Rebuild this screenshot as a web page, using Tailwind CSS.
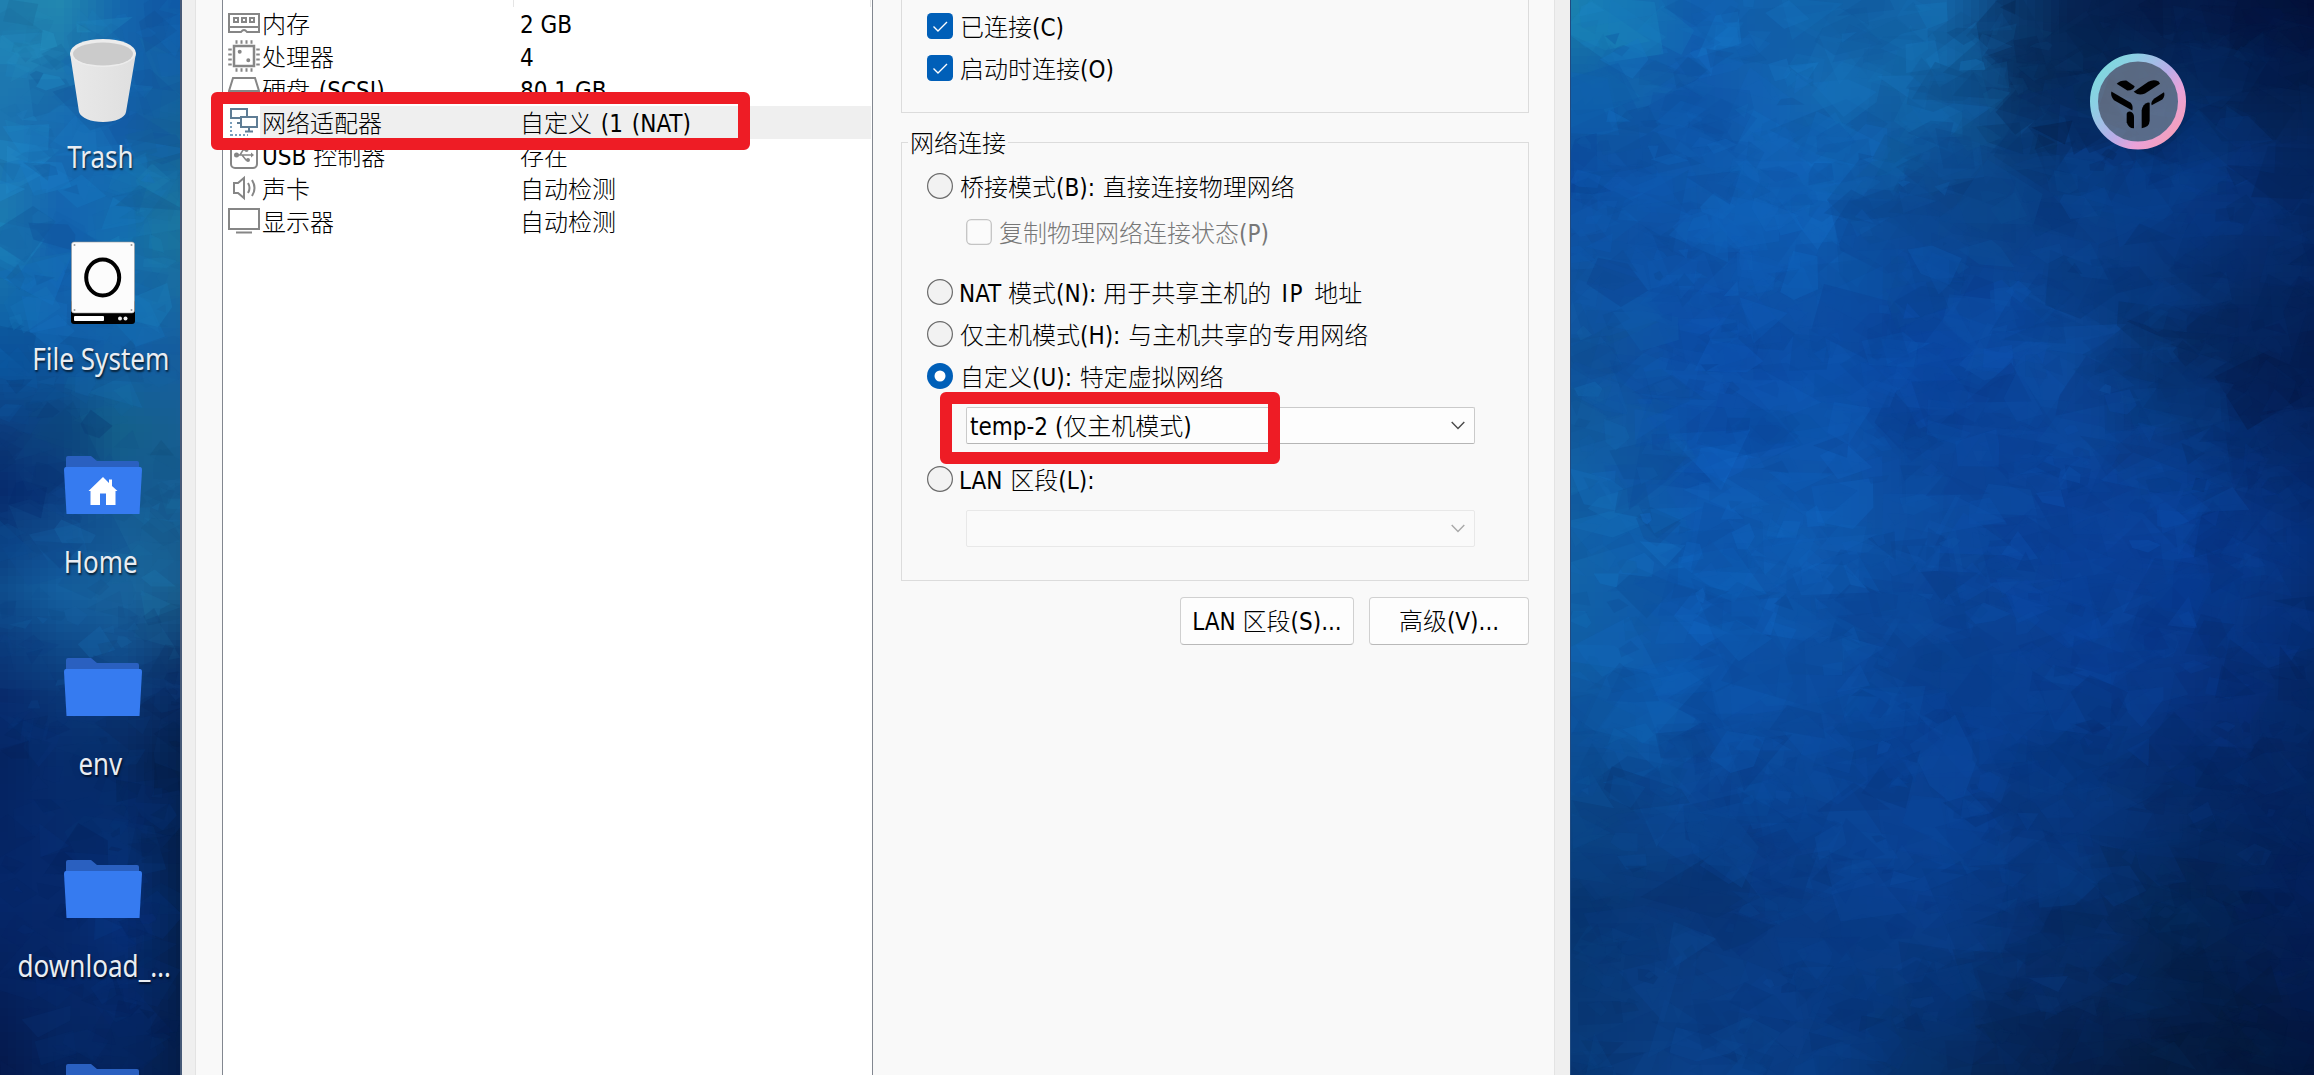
<!DOCTYPE html>
<html lang="zh-CN">
<head>
<meta charset="utf-8">
<title>虚拟机设置</title>
<script src="https://cdn.jsdelivr.net/npm/@tailwindcss/browser@4"></script>
</head>
<body class="h-[1075px] w-[2314px] overflow-hidden bg-[#062a66]">
<main class="relative flex h-[1075px] w-[2314px] overflow-hidden font-light text-[24px] text-black font-['DejaVu_Sans_Condensed','Noto_Sans_CJK_SC',sans-serif]">

  <!-- desktop, left strip -->
  <section class="relative h-full w-[182px] shrink-0 overflow-hidden border-r-2 border-[#465a78]">
    <svg id="wall-left" class="absolute inset-0" width="182" height="1075" viewBox="0 0 182 1075"></svg>
    <div class="relative flex flex-col font-normal text-[30px] leading-[36px] text-[#e9edf2] font-['Noto_Sans',sans-serif]">
      <div class="flex h-[202px] w-[201px] shrink-0 flex-col items-center pt-[38px]">
        <svg class="ml-[5px] shrink-0" width="68" height="86" viewBox="0 0 68 86"><defs><linearGradient id="bin"><stop offset="0" stop-color="#e9e9e9"/><stop offset="1" stop-color="#dfdfdf"/></linearGradient></defs><path d="M1 15L10 74C12 80 22 84 34 84S56 80 57 74L67 15Z" fill="url(#bin)"/><ellipse cx="34" cy="15" rx="33" ry="14" fill="#ececec"/><ellipse cx="34" cy="16" rx="30" ry="11.500" fill="#cbcbcb"/></svg>
        <span class="mt-[15px] scale-x-[0.865] whitespace-nowrap [text-shadow:1px_2px_2px_rgba(0,0,0,0.65)]">Trash</span>
      </div>
      <div class="flex h-[202px] w-[201px] shrink-0 flex-col items-center pt-[38px]">
        <svg class="ml-[5px] shrink-0" width="68" height="86" viewBox="0 0 68 86"><rect x="2" y="60" width="64" height="24" rx="3" fill="#000"/><rect x="2.500" y="2" width="63" height="71" rx="2.500" fill="#fcfcfc" stroke="#999" stroke-width=".6"/><ellipse cx="33.700" cy="37.500" rx="16.500" ry="18" fill="none" stroke="#000" stroke-width="4"/><rect x="5" y="76" width="30" height="5" rx="1" fill="#fff"/><circle cx="51" cy="78.500" r="2" fill="#eee"/><circle cx="56.500" cy="78.500" r="2" fill="#eee"/><g fill="#999"><circle cx="5.500" cy="5" r="1"/><circle cx="62.500" cy="5" r="1"/><circle cx="5.500" cy="70" r="1"/><circle cx="62.500" cy="70" r="1"/></g></svg>
        <span class="mt-[15px] scale-x-[0.87] whitespace-nowrap [text-shadow:1px_2px_2px_rgba(0,0,0,0.65)]">File System</span>
      </div>
      <div class="flex h-[202px] w-[201px] shrink-0 flex-col items-center pt-[50px]">
        <svg class="ml-[5px] shrink-0" width="80" height="62" viewBox="0 0 80 62"><path d="M3 16V4Q3 2 5 2H28L34 7H74Q76 7 76 9V16Z" fill="#2a60c0"/><path d="M1 16Q1 13 3 13H77Q79 13 79 16L76.500 60H3.500Z" fill="#367bf0"/><path d="M25.500 37L40 23L46 29V25.500H49V32L54.500 37H52.500V51H43V39.500H37V51H27.500V37Z" fill="#fff"/></svg>
        <span class="mt-[28px] ml-px scale-x-[0.865] whitespace-nowrap [text-shadow:1px_2px_2px_rgba(0,0,0,0.65)]">Home</span>
      </div>
      <div class="flex h-[202px] w-[201px] shrink-0 flex-col items-center pt-[50px]">
        <svg class="ml-[5px] shrink-0" width="80" height="62" viewBox="0 0 80 62"><path d="M3 16V4Q3 2 5 2H28L34 7H74Q76 7 76 9V16Z" fill="#2a60c0"/><path d="M1 16Q1 13 3 13H77Q79 13 79 16L76.500 60H3.500Z" fill="#367bf0"/></svg>
        <span class="mt-[28px] scale-x-[0.86] whitespace-nowrap [text-shadow:1px_2px_2px_rgba(0,0,0,0.65)]">env</span>
      </div>
      <div class="flex h-[204px] w-[201px] shrink-0 flex-col items-center pt-[50px]">
        <svg class="ml-[5px] shrink-0" width="80" height="62" viewBox="0 0 80 62"><path d="M3 16V4Q3 2 5 2H28L34 7H74Q76 7 76 9V16Z" fill="#2a60c0"/><path d="M1 16Q1 13 3 13H77Q79 13 79 16L76.500 60H3.500Z" fill="#367bf0"/></svg>
        <span class="mt-[28px] -ml-[12px] scale-x-[0.87] whitespace-nowrap [text-shadow:1px_2px_2px_rgba(0,0,0,0.65)]">download_…</span>
      </div>
      <div class="flex h-[202px] w-[201px] shrink-0 flex-col items-center pt-[50px]">
        <svg class="ml-[5px] shrink-0" width="80" height="62" viewBox="0 0 80 62"><path d="M3 16V4Q3 2 5 2H28L34 7H74Q76 7 76 9V16Z" fill="#2a60c0"/><path d="M1 16Q1 13 3 13H77Q79 13 79 16L76.500 60H3.500Z" fill="#367bf0"/></svg>
      </div>
    </div>
  </section>

  <!-- settings dialog -->
  <section class="flex h-full w-[1388px] shrink-0 bg-[#efefef] pl-[13px] pr-[15px]">
    <div class="flex h-full w-[1360px] border-x border-[#e3e3e3] bg-[#f9f9f9] pl-[26px]">

      <!-- device list -->
      <div class="flex h-full w-[651px] shrink-0 flex-col border-x border-[#828790] bg-white leading-[33px]">
        <div class="flex h-[7px] shrink-0 justify-between pl-[290px] pr-px"><i class="w-px bg-[#e5e5e5]"></i><i class="w-px bg-[#e5e5e5]"></i></div>
        <div class="flex h-[33px] pl-[5px]">
          <svg class="shrink-0" width="34" height="33" fill="none" stroke="#868686" stroke-width="2"><path d="M1 7H31V25H19Q16 21 13 25H1ZM1 20H31"/><path d="M6 11H10V15H6ZM14 11H18V15H14ZM22 11H26V15H22Z"/></svg>
          <span class="w-[258px] pt-[2px]">内存</span><span class="pt-[2px]">2 GB</span>
        </div>
        <div class="flex h-[33px] pl-[5px]">
          <svg class="shrink-0" width="34" height="33" fill="none" stroke="#868686" stroke-width="2"><path d="M6 6H26V26H6Z" stroke-width="2.500"/><path stroke-width="3.500" stroke-dasharray="2 3" d="M7.500 2H25M7.500 30H25M2 8.500V26M30 8.500V26"/><circle cx="11.700" cy="11.700" r="1" /><circle cx="20.300" cy="20.300" r="1"/></svg>
          <span class="w-[258px] pt-[2px]">处理器</span><span class="pt-[2px]">4</span>
        </div>
        <div class="flex h-[33px] pl-[5px]">
          <svg class="shrink-0" width="34" height="33" fill="none" stroke="#868686" stroke-width="2"><path d="M1 18L5 5H27L31 18V28H1ZM1 18H31"/></svg>
          <span class="w-[258px] pt-[2px] [word-spacing:2px]">硬盘 (SCSI)</span><span class="pt-[2px]">80.1 GB</span>
        </div>
        <div class="mr-px flex h-[33px] pl-[5px] bg-[linear-gradient(90deg,#fff_37px,#efefef_37px)]">
          <svg class="shrink-0" width="34" height="33" fill="none" stroke="#5f7d95" stroke-width="2"><path d="M13 12H3V3H19V10M9 17H13"/><path d="M13 11H29V21H13ZM21 21V25M17 25.500H25"/><path stroke="#7ba0bd" stroke-dasharray="2 2" d="M3 16V30M3 29H20"/></svg>
          <span class="w-[258px] pt-[2px]">网络适配器</span><span class="pt-[2px] [word-spacing:2px]">自定义 (1 (NAT)</span>
        </div>
        <div class="flex h-[33px] pl-[5px]">
          <svg class="shrink-0" width="34" height="33" fill="none" stroke="#868686" stroke-width="2"><rect x="3" y="3" width="26" height="26" rx="4"/><path stroke-width="1.500" d="M9 16H24M12 16L15 11H18M14 16L18 21H20"/><circle cx="8.500" cy="16" r="1.500" fill="#868686"/><path d="M23 13.500L26 16L23 18.500Z" fill="#868686" stroke="none"/><circle cx="18.500" cy="11" r="1"/><circle cx="20" cy="21" r="1"/></svg>
          <span class="w-[258px] pt-[2px]">USB 控制器</span><span class="pt-[2px]">存在</span>
        </div>
        <div class="flex h-[33px] pl-[5px]">
          <svg class="shrink-0" width="34" height="33" fill="none" stroke="#868686" stroke-width="2"><path d="M6 11H10L16 6V26L10 21H6ZM20 11Q23 16 20 21M24 8Q29 16 24 24"/></svg>
          <span class="w-[258px] pt-[2px]">声卡</span><span class="pt-[2px]">自动检测</span>
        </div>
        <div class="flex h-[33px] pl-[5px]">
          <svg class="shrink-0" width="34" height="33" fill="none" stroke="#868686" stroke-width="2"><path d="M1 4H31V24H1ZM8 27.500H24"/></svg>
          <span class="w-[258px] pt-[2px]">显示器</span><span class="pt-[2px]">自动检测</span>
        </div>
      </div>

      <!-- adapter settings -->
      <div class="flex h-full w-[656px] shrink-0 flex-col pl-[28px] leading-[30px]">
        <div class="flex h-[113px] shrink-0 flex-col gap-[16px] border border-t-0 border-[#dcdcdc] pl-[25px] pt-[13px]">
          <label class="flex h-[26px] gap-[7px]"><svg width="26" height="26"><rect width="26" height="26" rx="4.500" fill="#005fb8"/><path d="M6.500 13.500L11 18L20 9" fill="none" stroke="#fff" stroke-width="1.400"/></svg><span>已连接(C)</span></label>
          <label class="flex h-[26px] gap-[7px]"><svg width="26" height="26"><rect width="26" height="26" rx="4.500" fill="#005fb8"/><path d="M6.500 13.500L11 18L20 9" fill="none" stroke="#fff" stroke-width="1.400"/></svg><span>启动时连接(O)</span></label>
        </div>
        <div class="relative mt-[29px] flex h-[439px] shrink-0 flex-col border border-[#dcdcdc] pl-[25px] pt-[30px]">
          <span class="absolute -top-[14px] left-[6px] bg-[#f9f9f9] px-[2px]">网络连接</span>
          <label class="flex h-[26px] gap-[7px]"><svg width="26" height="26"><circle cx="13" cy="13" r="12.400" fill="#f2f2f2" stroke="#6b6b6b" stroke-width="1.200"/></svg><span class="[word-spacing:1px]">桥接模式(B): 直接连接物理网络</span></label>
          <label class="ml-[39px] mt-[20px] flex h-[26px] gap-[7px] text-[#777]"><svg width="26" height="26"><rect x=".7" y=".7" width="24.600" height="24.600" rx="4.500" fill="#fbfbfb" stroke="#c4c4c4" stroke-width="1.300"/></svg><span>复制物理网络连接状态(P)</span></label>
          <label class="mt-[34px] flex h-[26px] gap-[6px]"><svg width="26" height="26"><circle cx="13" cy="13" r="12.400" fill="#f2f2f2" stroke="#6b6b6b" stroke-width="1.200"/></svg><span>NAT 模式(N): 用于共享主机的<span class="tracking-[1.500px] [word-spacing:2px]"> IP </span>地址</span></label>
          <label class="mt-[16px] flex h-[26px] gap-[7px]"><svg width="26" height="26"><circle cx="13" cy="13" r="12.400" fill="#f2f2f2" stroke="#6b6b6b" stroke-width="1.200"/></svg><span class="[word-spacing:1px]">仅主机模式(H): 与主机共享的专用网络</span></label>
          <label class="mt-[16px] flex h-[26px] gap-[7px]"><svg width="26" height="26"><circle cx="13" cy="13" r="13" fill="#005fb8"/><circle cx="13" cy="13" r="5.500" fill="#fff"/></svg><span class="[word-spacing:1px]">自定义(U): 特定虚拟网络</span></label>
          <div class="ml-[39px] mt-[18px] flex h-[37px] w-[509px] items-center justify-between rounded-[2px] border border-[#cacaca] border-b-[#b5b5b5] bg-[#fdfdfd] pl-[3px] pr-[9px]"><span class="pt-[3px]">temp-2 (仅主机模式)</span><svg width="14" height="9"><path d="M.7 1L7 7.500L13.300 1" fill="none" stroke="#4a4a4a" stroke-width="1.400"/></svg></div>
          <label class="mt-[22px] flex h-[26px] gap-[6px]"><svg width="26" height="26"><circle cx="13" cy="13" r="12.400" fill="#f2f2f2" stroke="#6b6b6b" stroke-width="1.200"/></svg><span class="[word-spacing:1px]">LAN 区段(L):</span></label>
          <div class="ml-[39px] mt-[18px] flex h-[37px] w-[509px] items-center justify-end rounded-[2px] border border-[#e8e8e8] bg-[#fafafa] pr-[9px]"><svg width="14" height="9"><path d="M.7 1L7 7.500L13.300 1" fill="none" stroke="#a8a8a8" stroke-width="1.400"/></svg></div>
        </div>
        <div class="mt-[16px] flex h-[48px] shrink-0 justify-end gap-[15px] leading-[46px]">
          <div class="w-[174px] rounded-[4px] border border-[#d0d0d0] border-b-[#b9b9b9] bg-[#fdfdfd] pt-px text-center">LAN 区段(S)...</div>
          <div class="w-[160px] rounded-[4px] border border-[#d0d0d0] border-b-[#b9b9b9] bg-[#fdfdfd] pt-px text-center">高级(V)...</div>
        </div>
      </div>
    </div>
  </section>

  <!-- desktop, right side -->
  <section class="relative h-full w-[744px] shrink-0 overflow-hidden border-l border-[#204a80]">
    <svg id="wall-right" class="absolute inset-0" width="744" height="1075" viewBox="0 0 744 1075"></svg>
    <svg class="absolute left-[519px] top-[53px]" width="96" height="97" viewBox="0 0 288 290">
      <defs><linearGradient id="ring" x1=".05" y1=".15" x2=".9" y2=".85"><stop offset="0" stop-color="#7fd8dd"/><stop offset=".2" stop-color="#8ccfe4"/><stop offset=".55" stop-color="#b8aee9"/><stop offset=".78" stop-color="#eaa2d8"/><stop offset="1" stop-color="#f2a0bf"/></linearGradient></defs>
      <circle cx="144" cy="145" r="122" fill="#a9a9ad" fill-opacity=".52"/>
      <circle cx="144" cy="145" r="132" fill="none" stroke="url(#ring)" stroke-width="24"/>
      <g fill="#000"><path d="M80 92Q90 81 109 82L134 99Q132 111 112 112Z"/><path d="M131 116L175 86Q190 77 206 85L210 92L165 121Q145 129 131 116Z"/><path d="M64 115L122 149Q130 157 127 172L72 141Q61 130 64 115Z"/><path d="M185 156Q181 145 194 135L222 117Q226 127 217 139Z"/><path d="M110 182Q112 174 120 175Q132 178 132 192V225Q116 226 110 207Z"/><path d="M155 225V172Q158 153 174 148L179 149V203Q178 223 155 225Z"/></g>
    </svg>
  </section>

  <!-- highlight frames -->
  <div class="absolute left-[211px] top-[92px] h-[58px] w-[539px] rounded-[6px] border-[12px] border-[#ee1c25]"></div>
  <div class="absolute left-[940px] top-[392px] h-[72px] w-[340px] rounded-[6px] border-[12px] border-[#ee1c25]"></div>
</main>

<script>
  // Faceted blue wallpaper: a colour field with seeded random shards over it.
  function rng(s){return function(){s=(s*1664525+1013904223)>>>0;return s/4294967296;};}
  function field(rows,ys,w){
    const g=rows.map(r=>r.split(' ').map(c=>[0,2,4].map(i=>parseInt(c.substr(i,2),16))));
    return function(x,y){
      x=Math.max(0,Math.min(w-.01,x)); y=Math.max(0,Math.min(1074.9,y));
      let j=0; while(y>=ys[j+1]) j++;
      const n=g[0].length-1, fx=x/w*n, i=Math.floor(fx), a=fx-i, b=(y-ys[j])/(ys[j+1]-ys[j]);
      return [0,1,2].map(k=>(g[j][i][k]*(1-a)+g[j][i+1][k]*a)*(1-b)+(g[j+1][i][k]*(1-a)+g[j+1][i+1][k]*a)*b);
    };
  }
  function paint(id,w,f,count,size,seed){
    const r=rng(seed), out=[], s=8;
    const css=(c,k)=>'rgb('+c.map((v,i)=>Math.round(Math.min(255,v*(i===2?1+(k-1)*.7:k)))).join(',')+')';
    for(let y=0;y<1075;y+=s) for(let x=0;x<w;x+=s) out.push(`<rect x="${x}" y="${y}" width="${s}" height="${s}" fill="${css(f(x+s/2,y+s/2),1)}" shape-rendering="crispEdges"/>`);
    for(let n=0;n<count;n++){
      const x=r()*w, y=r()*1075, t=n/count, R=(size*(1-t)+9)*(.45+r()*.8), k=3+Math.floor(r()*3), a0=r()*6.28, flat=.45+r()*.5;
      let p='';
      for(let i=0;i<k;i++){const a=a0+i/k*6.28+(r()-.5)*.9, q=R*(.5+r()*.7); p+=(x+Math.cos(a)*q).toFixed(1)+','+(y+Math.sin(a)*q*flat).toFixed(1)+' ';}
      const c=f(x+(r()-.5)*size*1.5,y+(r()-.5)*size*1.5);
      out.push(`<polygon points="${p}" fill="${css(c,.82+r()*.4)}" opacity="${(.14+r()*.3).toFixed(2)}"/>`);
    }
    document.getElementById(id).innerHTML=out.join('');
  }
  paint('wall-right',744,field([
    '1a80ac 1160b0 1262a8 1466a8 062454 041a48 030f38',
    '1060a4 1058ac 1468b0 1260a0 052048 052a60 041c48',
    '0c4a9e 0f58aa 1060b4 0d4a8c 08387c 083a88 052a68',
    '11579a 0c48a0 0c50a8 0a419a 0c4a9c 062a60 041a4c',
    '1366aa 0f5ab0 0f58ac 0c4898 0b429a 0a44a0 06307a',
    '0e58a0 0c50a4 0b4a9c 093f90 083a88 07307a 042560',
    '083670 09387c 093a84 0a4090 083578 042452 04205a',
    '093a78 0b4088 083a80 062a5c 051f4c 041a3c 03143c'],[0,90,180,360,540,720,900,1076],744),2300,58,77);
  paint('wall-left',182,field([
    '2080b0 2288b0 1466ac 1058a8',
    '1c74b0 186cb0 1460ac 146098',
    '1c7cb0 1362b0 1470b0 1c78a0',
    '0b5aa4 0f58a0 1260a8 165ea0',
    '0c3c7c 0c447c 14608a 175f92',
    '062a6c 0c3c80 145890 165c90',
    '0e4c8c 1460a0 1966a0 185c8c',
    '082a6c 0a3878 0d3f80 082860',
    '052360 062c6c 062a64 041c44',
    '05276a 06286a 07307a 04204c',
    '05184a 05245e 05245e 041c48'],[0,120,240,350,430,490,590,690,760,900,1076],182),480,38,12);
</script>
</body>
</html>
